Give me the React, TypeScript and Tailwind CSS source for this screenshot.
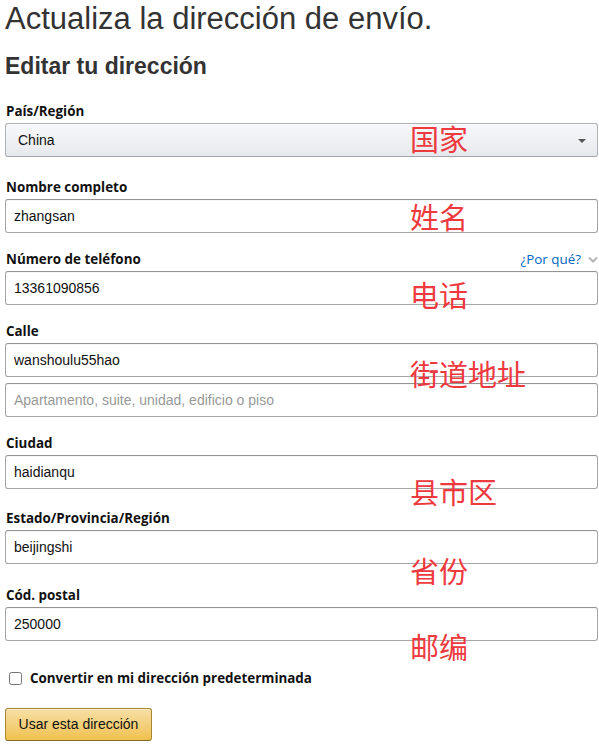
import { useState } from "react";

const labelCls =
  "ml-[1px] block pb-[2px] text-[13.4px] font-bold leading-[19px] text-[#111] [font-family:'Open_Sans',sans-serif]";
const inputCls =
  "block h-[34px] w-full rounded-[3px] border border-[#a6a6a6] border-t-[#949494] bg-white px-[8px] text-[14px] text-[#111] shadow-[inset_0_1px_0_rgba(255,255,255,0.5),0_1px_0_rgba(0,0,0,0.07)_inset] outline-none placeholder:text-[#999] [font-family:'Liberation_Sans',Arial,sans-serif]";

const notes = [
  { text: "国家", top: 124 },
  { text: "姓名", top: 202 },
  { text: "电话", top: 280 },
  { text: "街道地址", top: 359 },
  { text: "县市区", top: 477 },
  { text: "省份", top: 556 },
  { text: "邮编", top: 632 },
];

export default function App() {
  const [form, setForm] = useState({
    name: "zhangsan",
    phone: "13361090856",
    street: "wanshoulu55hao",
    street2: "",
    city: "haidianqu",
    state: "beijingshi",
    zip: "250000",
  });
  const [isDefault, setIsDefault] = useState(false);

  const update = (key: keyof typeof form) => (e: React.ChangeEvent<HTMLInputElement>) =>
    setForm({ ...form, [key]: e.target.value });

  return (
    <div className="relative min-h-[750px] w-[599px] bg-white pl-[5px] [font-family:'Liberation_Sans',Arial,sans-serif]">
      <h1 className="text-[31px] font-normal leading-[38px] text-[#333]">
        Actualiza la dirección de envío.
      </h1>
      <h2 className="mt-[14px] text-[23px] font-bold leading-[28px] text-[#333]">
        Editar tu dirección
      </h2>

      <form className="w-[593px]" onSubmit={(e) => e.preventDefault()}>
        {/* Country */}
        <div className="mt-[22px]">
          <label className={labelCls}>País/Región</label>
          <div className="relative flex h-[34px] items-center rounded-[3px] border border-[#adb1b8] border-b-[#a2a6ac] bg-gradient-to-b from-[#f7f8fa] to-[#e7e9ec] pl-[12px] text-[14px] text-[#111] shadow-[inset_0_1px_0_rgba(255,255,255,0.6)]">
            China
            <span className="absolute right-[11px] top-[15px] h-0 w-0 border-x-[4px] border-t-[4px] border-x-transparent border-t-[#555]" />
          </div>
        </div>

        {/* Name */}
        <div className="mt-[21px]">
          <label className={labelCls}>Nombre completo</label>
          <input className={inputCls} value={form.name} onChange={update("name")} />
        </div>

        {/* Phone */}
        <div className="mt-[17px]">
          <div className="flex items-start justify-between">
            <label className={labelCls}>Número de teléfono</label>
            <a className="flex items-center gap-[7px] text-[13.4px] leading-[19px] text-[#0066c0] [font-family:'Open_Sans',sans-serif]">
              ¿Por qué?
              <svg width="10" height="7" viewBox="0 0 10 7">
                <path d="M1 1.5 L5 5.5 L9 1.5" fill="none" stroke="#b4b4b4" strokeWidth="2" />
              </svg>
            </a>
          </div>
          <input className={inputCls} value={form.phone} onChange={update("phone")} />
        </div>

        {/* Street */}
        <div className="mt-[17px]">
          <label className={labelCls}>Calle</label>
          <input className={inputCls} value={form.street} onChange={update("street")} />
          <input
            className={`${inputCls} mt-[6px]`}
            placeholder="Apartamento, suite, unidad, edificio o piso"
            value={form.street2}
            onChange={update("street2")}
          />
        </div>

        {/* City */}
        <div className="mt-[17px]">
          <label className={labelCls}>Ciudad</label>
          <input className={inputCls} value={form.city} onChange={update("city")} />
        </div>

        {/* State */}
        <div className="mt-[20px]">
          <label className={labelCls}>Estado/Provincia/Región</label>
          <input className={inputCls} value={form.state} onChange={update("state")} />
        </div>

        {/* Zip */}
        <div className="mt-[22px]">
          <label className={labelCls}>Cód. postal</label>
          <input className={inputCls} value={form.zip} onChange={update("zip")} />
        </div>

        {/* Default checkbox */}
        <label className="mt-[27px] flex h-[20px] items-center gap-[8px] pl-[4px] text-[13.4px] font-bold text-[#111] [font-family:'Open_Sans',sans-serif]">
          <input
            type="checkbox"
            className="m-0 h-[13px] w-[13px]"
            checked={isDefault}
            onChange={(e) => setIsDefault(e.target.checked)}
          />
          Convertir en mi dirección predeterminada
        </label>

        {/* Submit */}
        <button
          type="submit"
          className="mt-[20px] h-[33px] w-[147px] rounded-[3px] border border-[#a88734] border-b-[#846a29] bg-gradient-to-b from-[#f7dfa5] to-[#f0c14b] text-[14px] text-[#111] shadow-[inset_0_1px_0_rgba(255,255,255,0.4)]"
        >
          Usar esta dirección
        </button>
      </form>

      {/* Red annotations */}
      {notes.map((n) => (
        <div
          key={n.text}
          className="pointer-events-none absolute left-[410px] text-[29px] leading-none text-[#ee3a3f] [font-family:'Noto_Sans_CJK_SC',sans-serif]"
          style={{ top: n.top }}
        >
          {n.text}
        </div>
      ))}
    </div>
  );
}
